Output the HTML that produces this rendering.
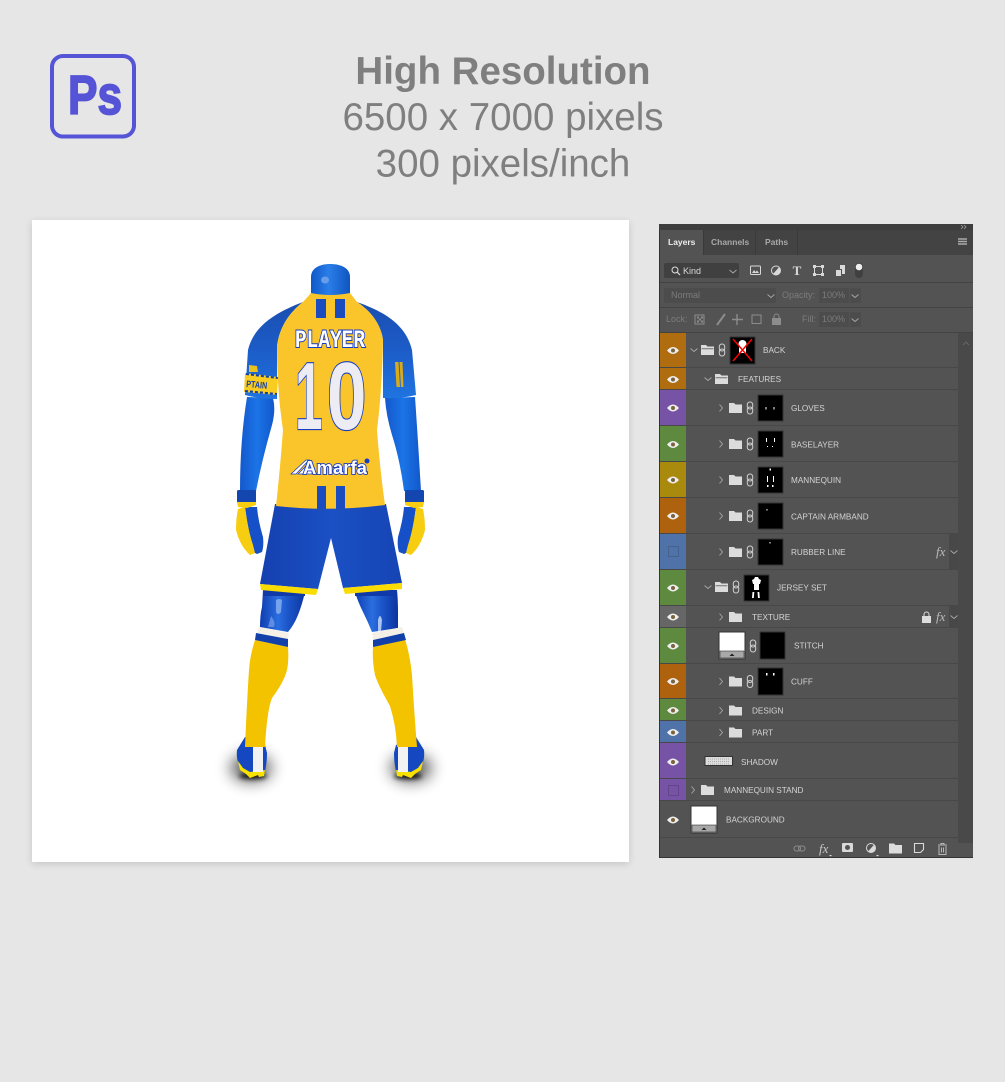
<!DOCTYPE html>
<html lang="en"><head><meta charset="utf-8"><title>High Resolution</title>
<style>
html,body{margin:0;padding:0;width:1005px;height:1082px;overflow:hidden;background:#e6e6e6}
svg{display:block;position:absolute;left:0;top:0}
text{font-family:"Liberation Sans",sans-serif}
.h{fill:#7f7f7f;font-size:38.5px;text-anchor:middle}
.l{fill:#d4d4d4;font-size:8.2px}
.d{fill:#7c7c7c;font-size:9px}
.m{fill:#000;stroke:#333;stroke-width:1}
.s{fill:#fff}
</style></head><body>
<svg width="1005" height="1082" viewBox="0 0 1005 1082" xmlns="http://www.w3.org/2000/svg">
<defs>
<filter id="b1" x="-80%" y="-80%" width="260%" height="260%"><feGaussianBlur stdDeviation="8"/></filter>
<filter id="b2" x="-50%" y="-100%" width="200%" height="300%"><feGaussianBlur stdDeviation="2.500"/></filter>
<filter id="b4" x="-10%" y="-10%" width="120%" height="120%"><feGaussianBlur stdDeviation="4"/></filter>
<linearGradient id="sl" x1="0" y1="0" x2="0" y2="1"><stop offset="0" stop-color="#1a4eb0"/><stop offset=".5" stop-color="#1c5cc8"/><stop offset="1" stop-color="#1f74e0"/></linearGradient>
<linearGradient id="ar" x1="0" y1="0" x2="1" y2="0"><stop offset="0" stop-color="#1458cc"/><stop offset=".5" stop-color="#1b74e6"/><stop offset="1" stop-color="#1258cc"/></linearGradient>
<linearGradient id="hd" x1="0" y1="0" x2="1" y2="0"><stop offset="0" stop-color="#0f58c8"/><stop offset=".45" stop-color="#2a7ee8"/><stop offset="1" stop-color="#0f55c2"/></linearGradient>
<linearGradient id="th" x1="0" y1="0" x2="1" y2="0"><stop offset="0" stop-color="#0f3db0"/><stop offset=".4" stop-color="#2a6ee0"/><stop offset=".6" stop-color="#1c58cc"/><stop offset="1" stop-color="#0c35a0"/></linearGradient>
<linearGradient id="sh" x1="0" y1="0" x2="1" y2="0"><stop offset="0" stop-color="#1540b0"/><stop offset=".5" stop-color="#1a50c4"/><stop offset="1" stop-color="#1644b4"/></linearGradient>
<g id="eye"><path d="M-6 0Q0-7 6 0Q0 7-6 0Z" fill="#eee"/><circle r="2" fill="#7a6440"/></g>
<path id="cr" d="M-1.5-3.5L1.5 0L-1.5 3.5" fill="none" stroke="#a8a8a8" stroke-width=".9"/>
<path id="cd" d="M-3.5-1.5L0 1.5L3.5-1.5" fill="none" stroke="#a8a8a8" stroke-width=".9"/>
<path id="fo" d="M0-5H5L6.5-3.5H13V5H0Z" fill="#dcdcdc"/>
<g id="fd"><path d="M0-5H5L6.5-3.5H13V5H0Z" fill="#dcdcdc"/><path d="M.6-1.2H12.4" stroke="#535353" stroke-width=".8"/></g>
<g id="lk" fill="none" stroke="#cfcfcf" stroke-width="1"><rect x="-2.7" y="-6" width="5.4" height="7" rx="2.6"/><rect x="-2.7" y="-1" width="5.4" height="7" rx="2.6"/></g>
<g id="wt"><rect width="26" height="27" fill="#fff" stroke="#333"/><rect x="1" y="19" width="24" height="7" fill="#a8a8a8" stroke="#333" stroke-width=".6"/><path d="M10.5 24L13 21.5L15.5 24Z" fill="#222"/></g>
<g id="glove">
<path d="M245 507H257Q258 520 263 537Q264 546 262 552L257 554L253 552Q248 530 245 507Z" fill="#1650c8"/>
<path d="M238 509L245 507Q248 530 253 545L255 553L250 555Q240 546 236 530Q236 518 238 509Z" fill="#f6cd10"/>
<rect x="237" y="490" width="19" height="13" rx="1.500" fill="#1446b0"/>
<path d="M237 502H256V505L247 508L238 507Z" fill="#f6cd10"/>
</g>
<g id="shoe">
<path d="M245 737L237 750Q236 760 240 766L250 776L264 775Q267 765 267 753L265 745Z" fill="#1548c0"/>
<path d="M238 761L243 768L250 772L265 770L264 776L259 777L258 775L250 778L246 774L240 770Z" fill="#f8e000"/>
<rect x="253" y="747" width="10" height="25" fill="#f2f2f2"/>
</g>
</defs>

<rect width="1005" height="1082" fill="#e6e6e6"/>

<!-- Ps logo -->
<rect x="52" y="56" width="82" height="80.500" rx="11" fill="none" stroke="#5553d6" stroke-width="4"/>
<text x="68" y="114" font-size="55" font-weight="700" fill="#5553d6" stroke="#5553d6" stroke-width="1.800" textLength="54" lengthAdjust="spacingAndGlyphs">Ps</text>

<!-- headline -->
<text class="h" x="503" y="84" font-weight="700">High Resolution</text>
<text class="h" x="503" y="130">6500 x 7000 pixels</text>
<text class="h" x="503" y="176.500">300 pixels/inch</text>

<!-- card -->
<rect x="32" y="222" width="597" height="642" fill="#000" opacity=".14" filter="url(#b4)"/>
<rect x="32" y="220" width="597" height="642" fill="#fff"/>

<!-- shadows -->
<ellipse cx="251" cy="768" rx="20" ry="13" fill="#000" opacity=".7" filter="url(#b1)"/>
<ellipse cx="411" cy="768" rx="20" ry="13" fill="#000" opacity=".7" filter="url(#b1)"/>
<ellipse cx="253" cy="776" rx="14" ry="3" fill="#000" opacity=".9" filter="url(#b2)"/>
<ellipse cx="408" cy="776" rx="14" ry="3" fill="#000" opacity=".9" filter="url(#b2)"/>

<!-- head -->
<path d="M311 295V277C311 268 320 264 330 264C341 264 350 268 350 277V295Z" fill="url(#hd)"/>
<ellipse cx="325" cy="280" rx="4" ry="3.500" fill="#7aa6ee" opacity=".8"/>

<!-- arms -->
<path d="M247 397L273 398Q276 410 272 425Q262 460 256 491H240Q240 440 247 397Z" fill="url(#ar)"/>
<path d="M385 398L415 397Q418 440 421 491H404Q400 460 392 435Q386 415 385 398Z" fill="url(#ar)"/>

<!-- gloves -->
<use href="#glove"/>
<use href="#glove" transform="matrix(-1 0 0 1 661 0)"/>

<!-- thighs -->
<path d="M263 590L305 592Q302 605 298 615Q294 625 288 632L260 627Q260 615 262 607Z" fill="url(#th)"/>
<path d="M355 592L397 590Q398 600 398 612V628L372 632Q368 622 363 612Q358 602 355 592Z" fill="url(#th)"/>
<rect x="263" y="590" width="42" height="6" fill="#0f3aa8"/><rect x="355" y="590" width="42" height="6" fill="#0f3aa8"/>
<path d="M276 600Q279 598 282 600L281 612Q278 616 276 612Z" fill="#a8c8f6" opacity=".6"/>
<path d="M378 620Q380 612 382 620L381 631H378Z" fill="#cfe0fa" opacity=".8"/>
<path d="M271 616Q276 622 274 627H268Z" fill="#a8c8f6" opacity=".45"/>

<!-- shoes -->
<use href="#shoe"/>
<use href="#shoe" transform="matrix(-1 0 0 1 661 0)"/>

<!-- socks -->
<path d="M255 640L288 647Q289 660 287 670Q284 682 272 698Q267 710 265 747H245Q247 700 249 670Q250 655 255 640Z" fill="#f3c300"/>
<path d="M373 647L405 639Q410 655 412 675Q414 710 417 747H397Q396 725 390 706Q378 685 375 675Q372 660 373 647Z" fill="#f3c300"/>
<path d="M259 627L289 633L288 639L257 633Z" fill="#f4f0e6"/>
<path d="M256 633L288 639L288 647L255 640Z" fill="#1240a8"/>
<path d="M372 633L402 627L404 633L373 640Z" fill="#f4f0e6"/>
<path d="M373 640L404 633L406 640L373 647Z" fill="#1240a8"/>

<!-- shorts -->
<path d="M275 504H386L402 583L343 588L331 538L318 589L260 584Z" fill="url(#sh)"/>
<path d="M260 584L318 589L316 595L261 590Z" fill="#fbdc00"/>
<path d="M343 588L402 583L402 589L345 594Z" fill="#fbdc00"/>

<!-- sleeves -->
<path d="M303 302C277 312 254 325 248 350L245 395Q260 399 277 399V347C279 327 290 312 303 302Z" fill="url(#sl)"/>
<path d="M357 302C385 312 406 325 412 350L416 395Q400 399 383 398V340C381 325 372 312 357 302Z" fill="url(#sl)"/>

<!-- armband -->
<path d="M249 365L257 366L258 372L249 372Z" fill="#e8c020"/>
<path d="M245 373L278 377L277 395L244 392Z" fill="#f8cc20"/>
<path d="M246 374L278 378" stroke="#1440a8" stroke-width="2" stroke-dasharray="3 2" fill="none"/>
<path d="M245 391L277 394" stroke="#1440a8" stroke-width="2" stroke-dasharray="3 2" fill="none"/>
<text transform="translate(246 387) rotate(5)" font-size="9.500" font-weight="700" fill="#1440a8" textLength="21" lengthAdjust="spacingAndGlyphs">PTAIN</text>
<g fill="#d9aa1a"><path d="M395 362h3.500l1.500 25h-3.500Z"/><path d="M399.500 362h3l1 25h-2.500Z"/></g>

<!-- jersey -->
<path d="M311 293Q330 297 350 293L357 302C372 312 381 325 383 340Q382 390 377 430Q380 470 385 505Q330 512 276 506Q280 470 283 430Q277 390 277 347C279 327 290 312 303 302Z" fill="#fac42b"/>
<rect x="316" y="299" width="10" height="19" fill="#1a4cc0"/><rect x="335" y="299" width="10" height="19" fill="#1a4cc0"/>
<rect x="317" y="486" width="9" height="23" fill="#1a4cc0"/><rect x="336" y="486" width="9" height="23" fill="#1a4cc0"/>

<!-- print -->
<text x="295" y="347" font-size="25" font-weight="700" fill="#fff" stroke="#1a3cc0" stroke-width="2" paint-order="stroke" textLength="70" lengthAdjust="spacingAndGlyphs" style="font-family:'Liberation Mono',monospace">PLAYER</text>
<g font-size="96" font-weight="700">
<text transform="translate(295 429) scale(.52 1)" fill="#ececf2" stroke="#1a3cc0" stroke-width="2.200" paint-order="stroke">1</text>
<text transform="translate(327 429) scale(.74 1)" fill="#ececf2" stroke="#1a3cc0" stroke-width="2.200" paint-order="stroke">0</text>
</g>
<path d="M291 474L306 460H309L296 474ZM298 474L310 462H312L303 474ZM305 474L312 466V474Z" fill="#fff" stroke="#1a3cc0" stroke-width=".7"/>
<text x="303" y="474" font-size="18" font-weight="700" fill="#fff" stroke="#1a3cc0" stroke-width="1.800" paint-order="stroke" textLength="64" lengthAdjust="spacingAndGlyphs">Amarfa</text>
<circle cx="367" cy="461" r="2.500" fill="#1a3cc0"/>

<!-- PANEL -->
<rect x="659" y="224" width="314" height="634" fill="#535353"/>
<rect x="659" y="224" width="1" height="634" fill="#333"/>
<rect x="659" y="224" width="314" height="6" fill="#3e3e3e"/>
<path d="M961 225L963 227L961 229M964 225L966 227L964 229" stroke="#aaa" stroke-width=".7" fill="none"/>
<rect x="660" y="230" width="313" height="25" fill="#434343"/>
<rect x="660" y="230" width="43" height="25" fill="#535353"/>
<rect x="703" y="230" width="1" height="25" fill="#3a3a3a"/><rect x="755" y="230" width="1" height="25" fill="#3a3a3a"/><rect x="797" y="230" width="1" height="25" fill="#3a3a3a"/>
<text x="668" y="245" font-size="8.500" font-weight="700" fill="#eee">Layers</text>
<text x="711" y="245" font-size="8.500" font-weight="700" fill="#a8a8a8">Channels</text>
<text x="765" y="245" font-size="8.500" font-weight="700" fill="#a8a8a8">Paths</text>
<path d="M958 239h9M958 241.500h9M958 244h9" stroke="#aaa" stroke-width="1.400"/>

<rect x="660" y="282" width="313" height="1" fill="#434343"/>
<rect x="660" y="307" width="313" height="1" fill="#434343"/>
<rect x="660" y="332" width="313" height="1" fill="#434343"/>
<rect x="664" y="263" width="75" height="15" rx="2" fill="#404040"/>
<circle cx="675" cy="270" r="3" fill="none" stroke="#ddd" stroke-width="1"/><path d="M677 272L680 275" stroke="#ddd" stroke-width="1.200"/>
<text x="683" y="274" font-size="9" fill="#d9d9d9">Kind</text>
<use href="#cd" x="733" y="271.500"/>
<!-- filter icons -->
<rect x="750.500" y="266" width="10" height="8.500" rx="1" fill="none" stroke="#d9d9d9"/><path d="M752 273L754 270L755.500 272L757 270.500L759 273Z" fill="#d9d9d9"/>
<circle cx="776" cy="270.500" r="4.500" fill="none" stroke="#d9d9d9"/><path d="M779 267.300A4.500 4.500 0 0 1 773 274Z" fill="#d9d9d9"/>
<text x="797" y="275" font-size="13" font-weight="700" text-anchor="middle" fill="#d9d9d9" style="font-family:'Liberation Serif',serif">T</text>
<rect x="814.500" y="266.500" width="8" height="8" fill="none" stroke="#d9d9d9"/><path d="M813 265h3v3h-3ZM821 265h3v3h-3ZM813 273h3v3h-3ZM821 273h3v3h-3Z" fill="#d9d9d9"/>
<path d="M836 270h5v6h-5ZM840 265h5v9h-3v-5h-2Z" fill="#d9d9d9"/>
<rect x="855" y="263" width="8" height="15" rx="4" fill="#404040"/><circle cx="859" cy="267" r="3.300" fill="#eee"/>

<!-- blend row -->
<rect x="664" y="288" width="112" height="15" rx="1" fill="#4c4c4c"/>
<text x="671" y="298" class="d">Normal</text><use href="#cd" x="771" y="296"/>
<text x="782" y="298" class="d">Opacity:</text>
<rect x="819" y="288" width="42" height="15" fill="#4c4c4c"/><rect x="849" y="288" width="1" height="15" fill="#535353"/>
<text x="822" y="298" class="d">100%</text><use href="#cd" x="855" y="296"/>

<!-- lock row -->
<text x="666" y="322" class="d">Lock:</text>
<g fill="none" stroke="#8c8c8c">
<rect x="695" y="315" width="9" height="9"/>
<path d="M717 325L725 314" stroke-width="2"/>
<path d="M737 314V325M732 319.500H743" stroke-width="1.400"/>
<rect x="752" y="315" width="9" height="8.500"/>
</g>
<path d="M697 316.500h2v2h-2ZM701 316.500h2v2h-2ZM699 318.500h2v2h-2ZM697 320.500h2v2h-2ZM701 320.500h2v2h-2Z" fill="#8c8c8c"/>
<rect x="772" y="318" width="9" height="7" fill="#8c8c8c"/><path d="M774 318v-1.500a2.500 2.500 0 0 1 5 0V318" fill="none" stroke="#8c8c8c"/>
<text x="802" y="322" class="d">Fill:</text>
<rect x="819" y="312" width="42" height="15" fill="#4c4c4c"/><rect x="849" y="312" width="1" height="15" fill="#535353"/>
<text x="822" y="322" class="d">100%</text><use href="#cd" x="855" y="320"/>

<!-- colour column -->
<rect x="660" y="333" width="26" height="57" fill="#b06d10"/>
<rect x="660" y="390" width="26" height="35" fill="#7653a5"/>
<rect x="660" y="426" width="26" height="35" fill="#5d8a3f"/>
<rect x="660" y="462" width="26" height="35" fill="#a98a0c"/>
<rect x="660" y="498" width="26" height="35" fill="#ae620d"/>
<rect x="660" y="534" width="26" height="35" fill="#4f73a8"/>
<rect x="660" y="570" width="26" height="35" fill="#5d8a3f"/>
<rect x="660" y="606" width="26" height="21" fill="#666"/>
<rect x="660" y="628" width="26" height="35" fill="#5d8a3f"/>
<rect x="660" y="664" width="26" height="34" fill="#ae620d"/>
<rect x="660" y="699" width="26" height="21" fill="#5d8a3f"/>
<rect x="660" y="721" width="26" height="21" fill="#4f73a8"/>
<rect x="660" y="743" width="26" height="35" fill="#7653a5"/>
<rect x="660" y="779" width="26" height="21" fill="#7653a5"/>

<!-- separators -->
<path d="M660 367.500H958M660 389.500H958M660 425.500H958M660 461.500H958M660 497.500H958M660 533.500H958M660 569.500H958M660 605.500H958M660 627.500H958M660 663.500H958M660 698.500H958M660 720.500H958M660 742.500H958M660 778.500H958M660 800.500H958M660 837.500H958" stroke="#484848"/>

<!-- scrollbar -->
<rect x="958" y="333" width="15" height="510" fill="#494949"/>
<path d="M963 345L966 342L969 345" fill="none" stroke="#666"/>

<!-- fx strips -->
<rect x="949" y="534" width="9" height="35" fill="#484848"/>
<rect x="949" y="606" width="9" height="21" fill="#484848"/>

<!-- eyes -->
<use href="#eye" x="673" y="350.500"/><use href="#eye" x="673" y="379.500"/><use href="#eye" x="673" y="408"/><use href="#eye" x="673" y="444.500"/><use href="#eye" x="673" y="480"/><use href="#eye" x="673" y="516"/><use href="#eye" x="673" y="588"/><use href="#eye" x="673" y="617"/><use href="#eye" x="673" y="646"/><use href="#eye" x="673" y="681.500"/><use href="#eye" x="673" y="710.500"/><use href="#eye" x="673" y="732.500"/><use href="#eye" x="673" y="762"/><use href="#eye" x="673" y="820"/>
<rect x="668.500" y="546.500" width="10" height="10" fill="none" stroke="#45618c"/>
<rect x="668.500" y="785.500" width="10" height="10" fill="none" stroke="#634589"/>

<!-- BACK -->
<use href="#cd" x="694" y="350"/><use href="#fd" x="701" y="350"/><use href="#lk" x="722" y="350"/>
<rect x="730" y="337" width="25" height="27" class="m"/><circle cx="742.500" cy="344" r="4" class="s"/><rect x="739" y="347" width="7" height="6" class="s"/>
<path d="M733 361L752 339M733 339L752 361" stroke="#f00" stroke-width="1.500"/>
<text class="l" x="763" y="353">BACK</text>
<!-- FEATURES -->
<use href="#cd" x="708" y="379"/><use href="#fd" x="715" y="379"/><text class="l" x="738" y="382">FEATURES</text>
<!-- GLOVES -->
<use href="#cr" x="721" y="408"/><use href="#fo" x="729" y="408"/><use href="#lk" x="750" y="408"/>
<rect x="758" y="395" width="25" height="26" class="m"/><rect x="765.500" y="407" width="1" height="2.500" class="s"/><rect x="773.500" y="407" width="1" height="2.500" class="s"/>
<text class="l" x="791" y="411">GLOVES</text>
<!-- BASELAYER -->
<use href="#cr" x="721" y="444"/><use href="#fo" x="729" y="444"/><use href="#lk" x="750" y="444"/>
<rect x="758" y="431" width="25" height="26" class="m"/><path d="M766 438h1v4h-1ZM774 438h1v4h-1ZM767 446h1v1h-1ZM772 446h1v1h-1Z" class="s"/>
<text class="l" x="791" y="447.500">BASELAYER</text>
<!-- MANNEQUIN -->
<use href="#cr" x="721" y="480"/><use href="#fo" x="729" y="480"/><use href="#lk" x="750" y="480"/>
<rect x="758" y="467" width="25" height="26" class="m"/><path d="M769.500 468.500h1.500v2h-1.500ZM767 476h1v6h-1ZM773 476h1v6h-1ZM767 485h1.500v2H767ZM772 485h1.500v2H772Z" class="s"/>
<text class="l" x="791" y="483">MANNEQUIN</text>
<!-- CAPTAIN -->
<use href="#cr" x="721" y="516"/><use href="#fo" x="729" y="516"/><use href="#lk" x="750" y="516"/>
<rect x="758" y="503" width="25" height="26" class="m"/><rect x="766.500" y="509" width="1" height="1.500" class="s"/>
<text class="l" x="791" y="519.500">CAPTAIN ARMBAND</text>
<!-- RUBBER -->
<use href="#cr" x="721" y="552"/><use href="#fo" x="729" y="552"/><use href="#lk" x="750" y="552"/>
<rect x="758" y="539" width="25" height="26" class="m"/><rect x="769.500" y="542" width="1" height="1.500" class="s"/>
<text class="l" x="791" y="555">RUBBER LINE</text>
<text x="936" y="556" font-size="13" font-style="italic" fill="#bbb" style="font-family:'Liberation Serif',serif">fx</text><use href="#cd" x="954" y="552"/>
<!-- JERSEY -->
<use href="#cd" x="708" y="587"/><use href="#fd" x="715" y="587"/><use href="#lk" x="736" y="587"/>
<rect x="744" y="575" width="25" height="26" class="m"/><path d="M755 577h3l1 2 2 1-1 4-1 0v6h-5v-6h-1l-1-4 2-1ZM752.500 592h1.800l-.5 6h-1.800ZM757.500 592h1.800l.5 6h-1.800Z" class="s"/>
<text class="l" x="777" y="590.500">JERSEY SET</text>
<!-- TEXTURE -->
<use href="#cr" x="721" y="617"/><use href="#fo" x="729" y="617"/><text class="l" x="752" y="620">TEXTURE</text>
<rect x="922" y="616" width="9" height="7" fill="#ddd"/><path d="M924 616v-1.500a2.500 2.500 0 0 1 5 0V616" fill="none" stroke="#ddd"/>
<text x="936" y="621" font-size="13" font-style="italic" fill="#bbb" style="font-family:'Liberation Serif',serif">fx</text><use href="#cd" x="954" y="617"/>
<!-- STITCH -->
<use href="#wt" x="719" y="632"/><use href="#lk" x="753" y="646"/>
<rect x="760" y="632" width="25" height="27" class="m"/>
<text class="l" x="794" y="648.500">STITCH</text>
<!-- CUFF -->
<use href="#cr" x="721" y="681.500"/><use href="#fo" x="729" y="681.500"/><use href="#lk" x="750" y="681.500"/>
<rect x="758" y="668" width="25" height="27" class="m"/><rect x="766" y="673" width="1.500" height="2.500" class="s"/><rect x="773" y="673" width="1.500" height="2.500" class="s"/>
<text class="l" x="791" y="684.500">CUFF</text>
<!-- DESIGN -->
<use href="#cr" x="721" y="710.500"/><use href="#fo" x="729" y="710.500"/><text class="l" x="752" y="713.500">DESIGN</text>
<!-- PART -->
<use href="#cr" x="721" y="732.500"/><use href="#fo" x="729" y="732.500"/><text class="l" x="752" y="735.500">PART</text>
<!-- SHADOW -->
<rect x="705" y="756.500" width="27.500" height="9" fill="#ddd" stroke="#333"/>
<path d="M708 759h22M708 761.500h22M708 764h22" stroke="#aaa" stroke-width="1" stroke-dasharray="1 1"/>
<text class="l" x="741" y="765">SHADOW</text>
<!-- STAND -->
<use href="#cr" x="693" y="790"/><use href="#fo" x="701" y="790"/><text class="l" x="724" y="793">MANNEQUIN STAND</text>
<!-- BACKGROUND -->
<use href="#wt" x="691" y="806"/><text class="l" x="726" y="822.500">BACKGROUND</text>

<!-- footer icons -->
<g fill="none" stroke="#8c8c8c" stroke-width="1.100"><rect x="794" y="846" width="6.500" height="5" rx="2.500"/><rect x="798.500" y="846" width="6.500" height="5" rx="2.500"/></g>
<text x="819" y="853" font-size="13" font-style="italic" fill="#c8c8c8" style="font-family:'Liberation Serif',serif">fx</text><path d="M829 855h3l-1.500 1.500Z" fill="#ddd"/>
<rect x="842" y="843" width="11" height="9" rx="1" fill="#d9d9d9"/><circle cx="847.500" cy="847.500" r="2.500" fill="#535353"/>
<circle cx="871" cy="848" r="4.500" fill="none" stroke="#d9d9d9"/><path d="M874 844.800A4.500 4.500 0 0 1 868 851.500Z" fill="#d9d9d9"/><path d="M876 855h3l-1.500 1.500Z" fill="#ddd"/>
<use href="#fo" x="889" y="848.500"/>
<path d="M914.500 843.500h9v6l-3 3h-6Z" fill="none" stroke="#d9d9d9" stroke-width="1.100"/>
<path d="M938 845h9M939 846v8.500h7V846M941 845v-1.500h3V845M941.500 847.500v5M943.500 847.500v5" fill="none" stroke="#b8b8b8" stroke-width="1"/>
<rect x="659" y="857" width="314" height="1" fill="#333"/>
</svg>
</body></html>
